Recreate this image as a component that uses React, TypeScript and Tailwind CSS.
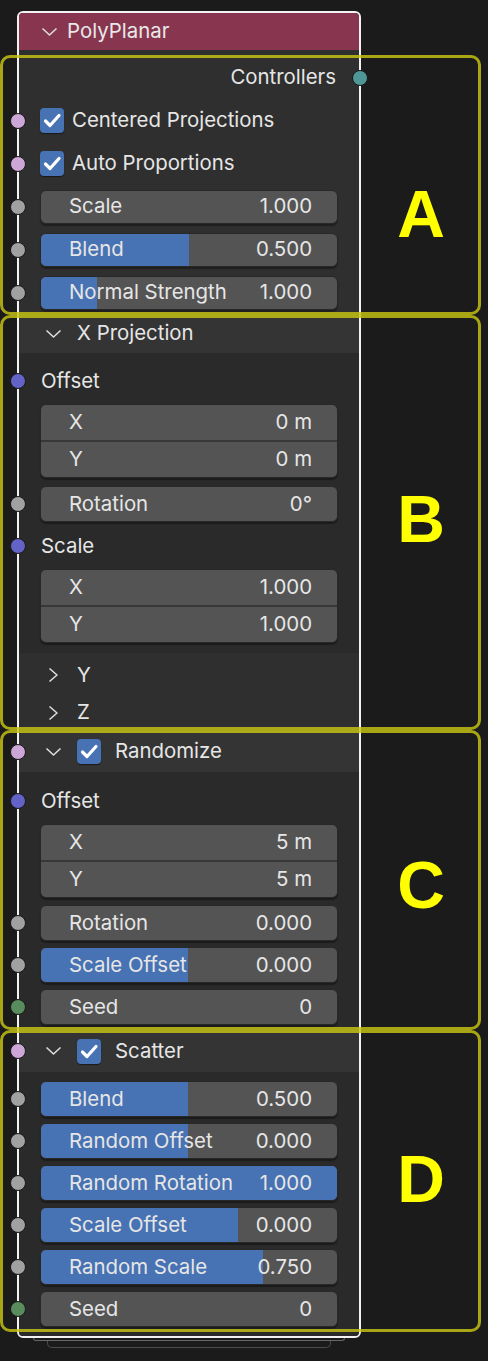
import React from 'react';

type SocketKind = 'bool' | 'float' | 'vector' | 'int' | 'shader';

const SOCKET_BG: Record<SocketKind, string> = {
  bool: 'bg-[#cca6d6]',
  float: 'bg-[#a1a1a1]',
  vector: 'bg-[#6363c7]',
  int: 'bg-[#598c5c]',
  shader: 'bg-[#4f9797]',
};

function Socket({ kind, right }: { kind: SocketKind; right?: boolean }) {
  return (
    <span
      className={`absolute top-1/2 -translate-y-1/2 w-[16px] h-[16px] rounded-full border border-[#1a1a1a] ${SOCKET_BG[kind]} ${
        right ? 'right-[-9px]' : 'left-[-9px]'
      }`}
    />
  );
}

function ChevronDown() {
  return (
    <svg width="17" height="10" viewBox="0 0 17 10" fill="none" className="shrink-0">
      <polyline points="1.5,1.5 8.5,8 15.5,1.5" stroke="#dcdcdc" strokeWidth="1.6" strokeLinejoin="round" />
    </svg>
  );
}

function ChevronRight() {
  return (
    <svg width="11" height="16" viewBox="0 0 11 16" fill="none" className="shrink-0">
      <polyline points="1.5,1.5 9,8 1.5,14.5" stroke="#dcdcdc" strokeWidth="1.6" strokeLinejoin="round" />
    </svg>
  );
}

function Checkbox() {
  return (
    <span className="w-[24px] h-[25px] shrink-0 rounded-[4px] bg-[#4772b3] shadow-[0_1px_1px_rgba(0,0,0,0.5)] flex items-center justify-center">
      <svg width="24" height="25" viewBox="0 0 24 25" fill="none">
        <polyline points="5.5,13 10,17.5 19,7.5" stroke="#ffffff" strokeWidth="3.2" strokeLinecap="round" strokeLinejoin="round" />
      </svg>
    </span>
  );
}

// slider / number field, fill is 0..1 of the blue bar
function Field({
  label,
  value,
  fill = 0,
  socket,
  height = 'h-[36px]',
}: {
  label: string;
  value: string;
  fill?: number;
  socket?: SocketKind;
  height?: string;
}) {
  return (
    <div className="relative px-[21px]">
      {socket && <Socket kind={socket} />}
      <div
        className={`relative ${height} rounded-[6px] bg-[#545454] border border-[#282828] overflow-hidden flex items-center justify-between pl-[28px] pr-[25px] shadow-[0_2px_1px_rgba(0,0,0,0.35)]`}
      >
        {fill > 0 && <div className="absolute inset-y-0 left-0 bg-[#4772b3]" style={{ width: `${fill * 100}%` }} />}
        <span className="relative">{label}</span>
        <span className="relative">{value}</span>
      </div>
    </div>
  );
}

function VectorField({ x, y }: { x: string; y: string }) {
  return (
    <div className="px-[21px]">
      <div className="rounded-[6px] border border-[#282828] bg-[#383838] overflow-hidden flex flex-col gap-[2px] shadow-[0_2px_1px_rgba(0,0,0,0.35)]">
        {[
          ['X', x],
          ['Y', y],
        ].map(([axis, v]) => (
          <div key={axis} className="h-[35px] bg-[#545454] flex items-center justify-between pl-[28px] pr-[25px]">
            <span>{axis}</span>
            <span>{v}</span>
          </div>
        ))}
      </div>
    </div>
  );
}

function Label({ text, socket }: { text: string; socket?: SocketKind }) {
  return (
    <div className="relative h-[40px] flex items-center pl-[22px]">
      {socket && <Socket kind={socket} />}
      {text}
    </div>
  );
}

function PanelHeader({
  label,
  height,
  checkbox,
  socket,
}: {
  label: string;
  height: string;
  checkbox?: boolean;
  socket?: SocketKind;
}) {
  return (
    <div className={`relative ${height} bg-[#343434] flex items-center pl-[26px]`}>
      {socket && <Socket kind={socket} />}
      <ChevronDown />
      {checkbox ? (
        <>
          <span className="ml-[15px]">
            <Checkbox />
          </span>
          <span className="ml-[14px]">{label}</span>
        </>
      ) : (
        <span className="ml-[15px]">{label}</span>
      )}
    </div>
  );
}

function Annotation({ letter, top, height, letterTop }: { letter: string; top: string; height: string; letterTop: string }) {
  return (
    <div
      className={`absolute left-0 ${top} ${height} w-[481px] rounded-[10px] border-[3px] border-[rgba(200,198,20,0.82)] pointer-events-none`}
    >
      <span
        className={`absolute left-[358px] w-[120px] ${letterTop} text-center text-[66px] leading-none font-bold text-[#ffff00] font-['Liberation_Sans',Arial,sans-serif]`}
      >
        {letter}
      </span>
    </div>
  );
}

export default function App() {
  return (
    <div className="relative w-[488px] h-[1361px] overflow-hidden bg-[#1b1b1b] pt-[11px] text-[20.4px] text-[#e6e6e6] font-['Inter','Noto_Sans',sans-serif]">
      {/* node */}
      <div className="ml-[17px] w-[344px] rounded-[6px] border-2 border-[#f2f2f2] bg-[#2f2f2f]">
        <div className="h-[37px] rounded-t-[4px] bg-[#883650] flex items-center pl-[22px] gap-[9px]">
          <ChevronDown />
          <span className="text-[#e8e8e8]">PolyPlanar</span>
        </div>

        {/* main sockets */}
        <div className="pt-[6px]">
          <div className="relative h-[43px] flex items-center justify-end pr-[23px]">
            Controllers
            <Socket kind="shader" right />
          </div>
          <div className="relative h-[43px] flex items-center gap-[8px] pl-[21px]">
            <Socket kind="bool" />
            <Checkbox />
            Centered Projections
          </div>
          <div className="relative h-[43px] flex items-center gap-[8px] pl-[21px]">
            <Socket kind="bool" />
            <Checkbox />
            Auto Proportions
          </div>
          {[
            ['Scale', '1.000', 0],
            ['Blend', '0.500', 0.5],
            ['Normal Strength', '1.000', 0.19],
          ].map(([l, v, f]) => (
            <div key={l as string} className="h-[43px] flex flex-col justify-center">
              <Field label={l as string} value={v as string} fill={f as number} socket="float" height="h-[34px]" />
            </div>
          ))}
        </div>

        {/* X projection panel */}
        <PanelHeader label="X Projection" height="h-[39px]" />
        <div className="bg-[#2a2a2a] pt-[8px] pb-[10px]">
          <Label text="Offset" socket="vector" />
          <div className="mt-[3px]">
            <VectorField x="0 m" y="0 m" />
          </div>
          <div className="mt-[8px]">
            <Field label="Rotation" value="0°" socket="float" />
          </div>
          <div className="mt-[4px]">
            <Label text="Scale" socket="vector" />
          </div>
          <div className="mt-[3px]">
            <VectorField x="1.000" y="1.000" />
          </div>
        </div>
        <div className="bg-[#2f2f2f] pt-[3px]">
          {['Y', 'Z'].map((a, i) => (
            <div key={a} className={`${i === 0 ? 'h-[38px]' : 'h-[37px]'} flex items-center pl-[29px] gap-[18px]`}>
              <ChevronRight />
              {a}
            </div>
          ))}
        </div>

        {/* randomize panel */}
        <PanelHeader label="Randomize" height="h-[41px]" checkbox socket="bool" />
        <div className="bg-[#2a2a2a] pt-[9px] pb-[5px]">
          <Label text="Offset" socket="vector" />
          <div className="mt-[3px]">
            <VectorField x="5 m" y="5 m" />
          </div>
          <div className="mt-[7px] flex flex-col gap-[6px]">
            <Field label="Rotation" value="0.000" socket="float" />
            <Field label="Scale Offset" value="0.000" fill={0.495} socket="float" />
            <Field label="Seed" value="0" socket="int" />
          </div>
        </div>

        {/* scatter panel */}
        <PanelHeader label="Scatter" height="h-[42px]" checkbox socket="bool" />
        <div className="bg-[#2a2a2a] pt-[9px] pb-[9px] rounded-b-[4px] flex flex-col gap-[6px]">
          <Field label="Blend" value="0.500" fill={0.495} socket="float" />
          <Field label="Random Offset" value="0.000" fill={0.495} socket="float" />
          <Field label="Random Rotation" value="1.000" fill={1} socket="float" />
          <Field label="Scale Offset" value="0.000" fill={0.665} socket="float" />
          <Field label="Random Scale" value="0.750" fill={0.75} socket="float" />
          <Field label="Seed" value="0" socket="int" />
        </div>
      </div>

      {/* stacked node edges */}
      <div className="ml-[33px] w-[312px] h-[3px] rounded-b-[5px] border-x border-b border-[#666666]" />
      <div className="ml-[47px] w-[284px] h-[7px] rounded-b-[5px] border-x border-b border-[#4c4c4c]" />

      <Annotation letter="A" top="top-[55px]" height="h-[260px]" letterTop="top-[123px]" />
      <Annotation letter="B" top="top-[315px]" height="h-[415px]" letterTop="top-[168px]" />
      <Annotation letter="C" top="top-[730px]" height="h-[300px]" letterTop="top-[119px]" />
      <Annotation letter="D" top="top-[1030px]" height="h-[302px]" letterTop="top-[113px]" />
    </div>
  );
}
